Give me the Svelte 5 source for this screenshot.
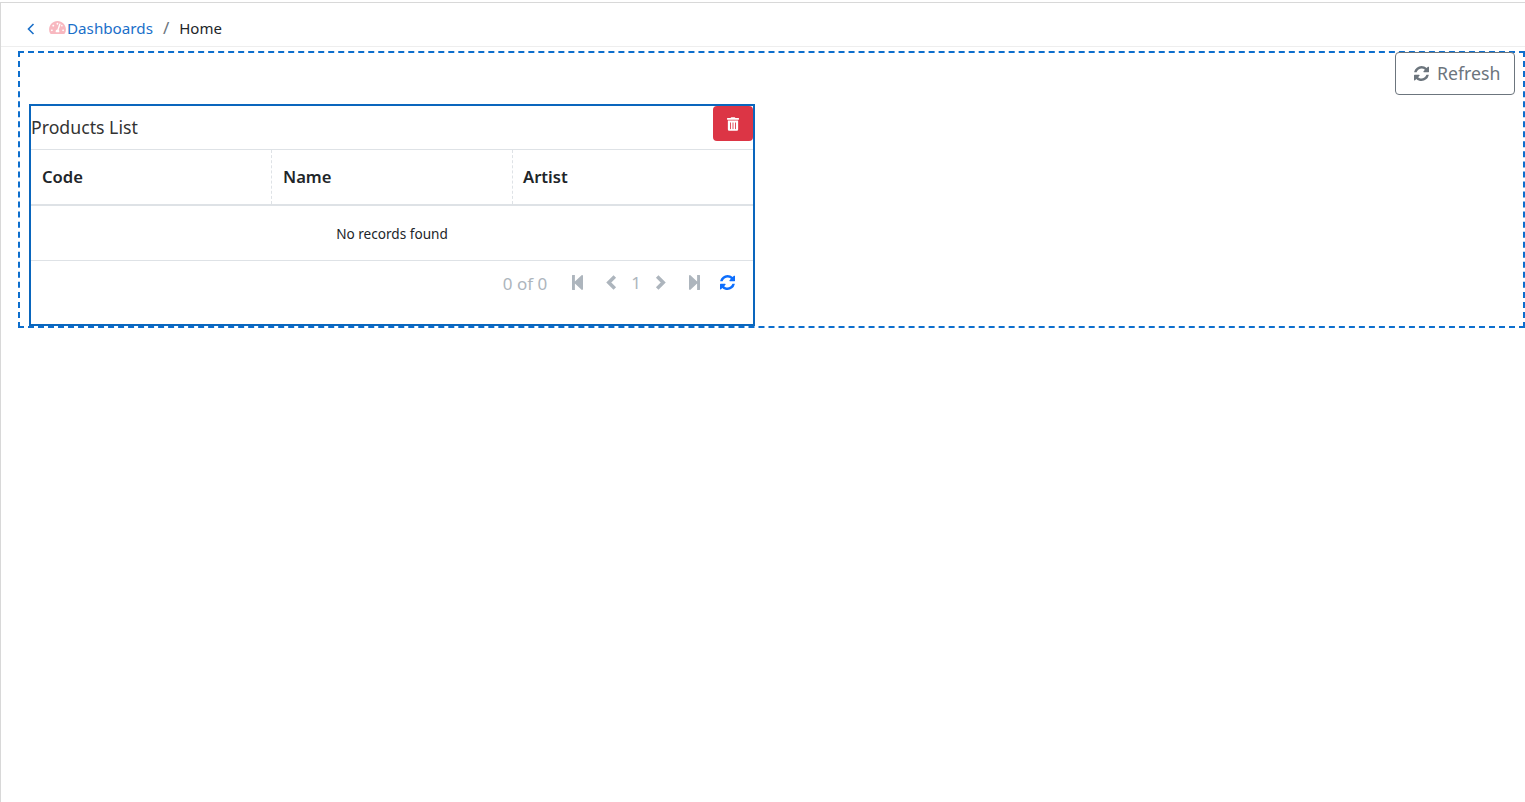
<script>
  const refresh = "M1511 928q0 5-1 7-64 268-268 434.5T764 1536q-146 0-282.5-55T238 1324l-129 129q-19 19-45 19t-45-19-19-45V960q0-26 19-45t45-19h448q26 0 45 19t19 45-19 45l-137 137q71 66 161 102t187 36q134 0 250-65t186-179q11-17 53-117 8-23 30-23h192q13 0 22.5 9.5t9.5 22.5zm25-800v448q0 26-19 45t-45 19h-448q-26 0-45-19t-19-45 19-45l138-138Q969 256 768 256q-134 0-250 65T332 500q-11 17-53 117-8 23-30 23H50q-13 0-22.5-9.5T18 608v-7q65-268 270-434.5T768 0q146 0 284 55.5T1297 212l130-129q19-19 45-19t45 19 19 45z";
  const columns = ["Code", "Name", "Artist"];
</script>

<div class="page">
  <nav class="crumbs">
    <svg class="back" viewBox="0 0 10 14"><path d="M7.5 2 2.5 7l5 5" /></svg>
    <svg class="gauge" viewBox="0 0 576 512"><path d="M288 32C128.94 32 0 160.94 0 320c0 52.8 14.25 102.26 39.06 144.8 5.61 9.62 16.3 15.2 27.44 15.2h443c11.14 0 21.83-5.58 27.44-15.2C561.75 422.26 576 372.8 576 320c0-159.06-128.94-288-288-288zm0 64c14.71 0 26.58 10.13 30.32 23.65-1.11 2.26-2.64 4.23-3.45 6.67l-9.22 27.67c-5.13 3.49-10.97 6.01-17.64 6.01-17.67 0-32-14.33-32-32S270.33 96 288 96zM96 384c-17.67 0-32-14.33-32-32s14.33-32 32-32 32 14.33 32 32-14.33 32-32 32zm48-160c-17.67 0-32-14.33-32-32s14.33-32 32-32 32 14.33 32 32-14.33 32-32 32zm246.77-72.41l-61.33 184C343.13 347.33 352 364.54 352 384c0 11.72-3.38 22.55-8.88 32H232.88c-5.5-9.45-8.88-20.28-8.88-32 0-33.94 26.5-61.43 59.9-63.59l61.34-184.01c4.17-12.56 17.73-19.45 30.36-15.17 12.57 4.19 19.35 17.79 15.17 30.36zm14.66 57.2l15.52-46.55c3.47-1.29 7.13-2.23 11.05-2.23 17.67 0 32 14.33 32 32s-14.33 32-32 32c-11.38-.01-20.89-6.28-26.57-15.22zM480 384c-17.67 0-32-14.33-32-32s14.33-32 32-32 32 14.33 32 32-14.33 32-32 32z" /></svg>
    <a class="link" href="#d">Dashboards</a>
    <span class="sep">/</span>
    <span class="here">Home</span>
  </nav>

  <section class="zone">
    <div class="toolbar">
      <button class="refresh">
        <svg viewBox="0 0 1536 1536"><path d={refresh} /></svg>
        <span class="refresh-label">Refresh</span>
      </button>
    </div>

    <div class="card">
      <div class="title">
        <span>Products List</span>
        <button class="del" aria-label="Delete">
          <svg viewBox="0 0 448 512"><path d="M32 464a48 48 0 0 0 48 48h288a48 48 0 0 0 48-48V128H32zm272-256a16 16 0 0 1 32 0v224a16 16 0 0 1-32 0zm-96 0a16 16 0 0 1 32 0v224a16 16 0 0 1-32 0zm-96 0a16 16 0 0 1 32 0v224a16 16 0 0 1-32 0zM432 32H312l-9.4-18.7A24 24 0 0 0 281.1 0H166.8a23.72 23.72 0 0 0-21.4 13.3L136 32H16A16 16 0 0 0 0 48v32a16 16 0 0 0 16 16h416a16 16 0 0 0 16-16V48a16 16 0 0 0-16-16z" /></svg>
        </button>
      </div>
      <div class="thead">
        {#each columns as c}<div class="th">{c}</div>{/each}
      </div>
      <div class="empty">No records found</div>
      <div class="pager">
        <span class="count">0 of 0</span>
        <svg class="pi first" viewBox="0 0 11 15"><path d="M0 .5C0 .2.2 0 .5 0h2.4v6.4L9.6.3c.6-.5 1.4-.2 1.4.6v13.2c0 .8-.8 1.1-1.4.6L2.9 8.6V15H.5c-.3 0-.5-.2-.5-.5z" /></svg>
        <svg class="pi chev prev" viewBox="0 0 12 15"><path d="M9.8 1.5 3.8 7.5l6 6" /></svg>
        <span class="num">1</span>
        <svg class="pi chev next" viewBox="0 0 12 15"><path d="M2.2 1.5 8.2 7.5l-6 6" /></svg>
        <svg class="pi last" viewBox="0 0 11 15"><path d="M11 .5c0-.3-.2-.5-.5-.5H8.1v6.4L1.4.3C.8-.2 0 .1 0 .9v13.2c0 .8.8 1.1 1.4.6l6.7-6.1V15h2.4c.3 0 .5-.2.5-.5z" /></svg>
        <svg class="pi reload" viewBox="0 0 1536 1536"><path d={refresh} /></svg>
      </div>
    </div>
  </section>
</div>

<style>
  :global(body) {
    margin: 0;
    background: #fff;
    font-family: "Noto Sans", "Open Sans", sans-serif;
    color: #212529;
  }
  .page {
    box-sizing: border-box;
    height: 800px;
    margin-top: 2px;
    border-top: 1px solid #d8d8d8;
    border-left: 1px solid #d8d8d8;
    overflow: hidden;
  }
  .crumbs {
    box-sizing: border-box;
    height: 44px;
    display: flex;
    align-items: center;
    padding: 6px 0 0 25px;
    border-bottom: 1px solid #eeeeee;
    font-size: 15px;
  }
  .back {
    width: 10px;
    height: 14px;
    margin-top: 3px;
    fill: none;
    stroke: #1a6fc9;
    stroke-width: 1.6;
  }
  .gauge {
    width: 17px;
    height: 15px;
    margin-left: 13px;
    margin-right: 1px;
    fill: #f8b8c0;
  }
  .link {
    color: #1a6fc9;
    font-size: 15.2px;
    text-decoration: none;
  }
  .sep {
    color: #6c757d;
    font-size: 17px;
    margin: 0 10px;
  }
  .here {
    color: #212529;
    font-size: 15px;
  }
  .zone {
    box-sizing: border-box;
    margin: 4px 0 0 17px;
    height: 277px;
    border: 2px dashed #0d6ecd;
    padding: 0 8px 0 9px;
  }
  .toolbar {
    display: flex;
    justify-content: flex-end;
    margin-top: -1px;
  }
  .refresh {
    box-sizing: border-box;
    width: 120px;
    height: 43px;
    display: flex;
    align-items: center;
    gap: 7px;
    background: #fff;
    border: 1px solid #6c757d;
    border-radius: 4px;
    color: #6c757d;
    font: inherit;
    font-size: 17.7px;
    padding: 0 0 0 18px;
  }
  .refresh svg {
    width: 15px;
    height: 15px;
    fill: #6c757d;
  }
  .refresh-label {
    margin: -2px 0 0 1px;
  }
  .card {
    box-sizing: border-box;
    width: 726px;
    height: 222px;
    margin-top: 9px;
    border: 2px solid #0a66bd;
    display: flex;
    flex-direction: column;
  }
  .title {
    box-sizing: border-box;
    height: 44px;
    display: flex;
    justify-content: space-between;
    align-items: flex-start;
    font-size: 17.7px;
    line-height: 42px;
    color: #333;
    border-bottom: 1px solid #dee2e6;
  }
  .del {
    box-sizing: border-box;
    width: 40px;
    height: 35px;
    display: flex;
    align-items: center;
    justify-content: center;
    background: #dc3545;
    border: 0;
    border-radius: 4px;
    padding: 0;
  }
  .del svg {
    width: 12px;
    height: 14px;
    fill: #fff;
  }
  .thead {
    box-sizing: border-box;
    height: 56px;
    display: grid;
    grid-template-columns: 240px 241px 1fr;
    border-bottom: 2px solid #dee2e6;
  }
  .th {
    display: flex;
    align-items: center;
    padding: 0 0 2px 11px;
    font-size: 16.6px;
    font-weight: 600;
    border-left: 1px dashed #dee2e6;
  }
  .th:first-child {
    border-left: 0;
  }
  .th:last-child {
    padding-left: 10px;
  }
  .empty {
    box-sizing: border-box;
    height: 55px;
    display: flex;
    align-items: center;
    justify-content: center;
    font-size: 13.6px;
    border-bottom: 1px solid #dee2e6;
  }
  .pager {
    display: flex;
    align-items: center;
    justify-content: flex-end;
    height: 44px;
    padding: 0 18px 2px 0;
    box-sizing: border-box;
    color: #adb5bd;
    font-size: 17px;
  }
  .count {
    margin-top: 2px;
  }
  .pi {
    height: 15px;
    fill: #adb5bd;
    flex: none;
  }
  .first, .last {
    width: 11px;
  }
  .first {
    margin-left: 25px;
  }
  .chev {
    width: 12px;
    fill: none;
    stroke: #adb5bd;
    stroke-width: 3.6;
  }
  .prev {
    margin-left: 22px;
  }
  .num {
    margin: 0 14px;
  }
  .last {
    margin-left: 22px;
  }
  .reload {
    width: 15px;
    margin-left: 20px;
    fill: #0d6efd;
  }
</style>
